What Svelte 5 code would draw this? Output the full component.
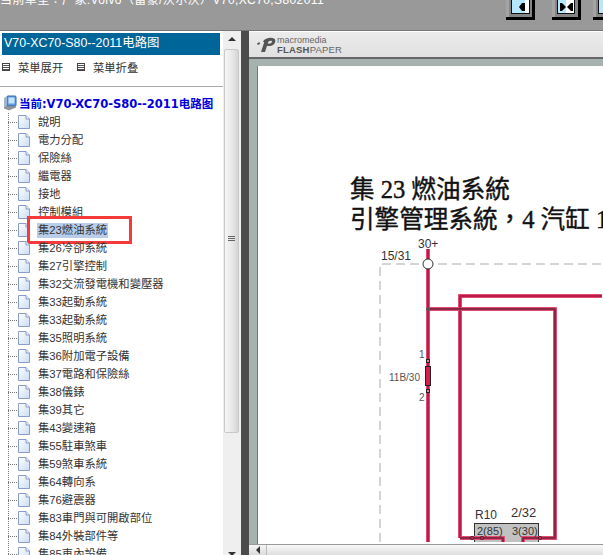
<script>
  const items = ['說明','電力分配','保險絲','繼電器','接地','控制模組','集23燃油系統','集26冷卻系統','集27引擎控制','集32交流發電機和變壓器','集33起動系統','集33起動系統','集35照明系統','集36附加電子設備','集37電路和保險絲','集38儀錶','集39其它','集43變速箱','集55駐車煞車','集59煞車系統','集64轉向系','集76避震器','集83車門與可開啟部位','集84外裝部件等','集85車內設備'];
  const selected = 6;
  const wires = [
    { d: 'M429 250V543', core: '#a01a40' },
    { d: 'M461 539V297H603', core: '#a01a40' },
    { d: 'M429 310H556V539H524V543', core: '#3e343a' },
    { d: 'M461 539H504V543', core: '#3e343a' }
  ];
</script>

<div class="app">
  <header class="top">
    <div class="crumb">当前車型：厂家:Volvo（富豪/沃尔沃）V70,XC70,S802011</div>
    <svg class="btn" width="29" height="20" viewBox="0 0 29 20">
      <rect width="29" height="20" fill="#858585"/><rect width="3" height="20" fill="#a4a4a4"/>
      <path d="M0 20V17H26V0H29V20Z" fill="#000"/>
      <rect x="5.5" y="-1" width="18" height="14.5" fill="#b5e8ff" stroke="#111"/><rect x="19" y="0" width="4" height="13" fill="#fff"/>
      <path d="M13 7 16 3H19V11H16Z" fill="#000"/>
    </svg>
    <svg class="btn second" width="29" height="20" viewBox="0 0 29 20">
      <rect width="29" height="20" fill="#858585"/><rect width="3" height="20" fill="#a4a4a4"/>
      <path d="M0 20V17H26V0H29V20Z" fill="#000"/>
      <rect x="5.5" y="-1" width="17" height="14.5" fill="#b5e8ff" stroke="#111"/><rect x="14" y="0" width="8" height="13" fill="#fff"/>
      <path d="M8 3H10L14 7 10 11H8ZM21 3H19L15 7 19 11H21Z" fill="#000"/>
    </svg>
    <svg class="btn third" width="29" height="20" viewBox="0 0 29 20">
      <rect width="29" height="20" fill="#858585"/><rect width="3" height="20" fill="#a4a4a4"/>
      <path d="M0 20V17H29V20Z" fill="#000"/>
      <rect x="5.5" y="-1" width="17" height="14.5" fill="#b5e8ff" stroke="#111"/>
    </svg>
  </header>

  <div class="main">
    <aside class="left">
      <div class="tree">
        <h1 class="title">V70-XC70-S80--2011电路图</h1>
        <div class="actions">
          <span class="action"><i class="menu-icon"></i>菜単展开</span>
          <span class="action"><i class="menu-icon"></i>菜単折叠</span>
        </div>
        <div class="root">
          <svg width="14" height="16" viewBox="0 0 14 16">
            <rect x="4" y="1" width="9" height="10" rx="1" fill="#5f9be0" stroke="#3568ad"/>
            <rect x="5.5" y="2.5" width="6" height="6" fill="#c8e4fa"/>
            <path d="M1 3 4 1V11L1 13Z" fill="#9fb6d2"/>
            <path d="M1 13 6 15 13 12 8 11 4 11Z" fill="#8c97a8" stroke="#666" stroke-width=".5"/>
          </svg>
          <span>当前:V70-XC70-S80--2011电路图</span>
        </div>
        <ul class="list">
          {#each items as item, i}
            <li class="row">
              <span class="conn"></span>
              <svg class="page-icon" width="12" height="16" viewBox="0 0 12 16">
                <defs><linearGradient id="pg{i}" x1="0" y1="0" x2="1" y2="1"><stop offset="0" stop-color="#fff"/><stop offset="1" stop-color="#c9dcf5"/></linearGradient></defs>
                <path d="M.5 1.5H8L11.5 5V14.5H.5Z" fill="url(#pg{i})" stroke="#8a9cc8"/>
                <path d="M8 1.5V5H11.5" fill="#e8f0fb" stroke="#8a9cc8"/>
              </svg>
              <span class="label" class:selected={i === selected}>{item}</span>
              {#if i === selected}<span class="mark"></span>{/if}
            </li>
          {/each}
        </ul>
      </div>
      <div class="vscroll">
        <span class="arrow up"></span>
        <div class="vthumb"><i></i><i></i><i></i></div>
        <span class="arrow down"></span>
      </div>
    </aside>

    <div class="divider"></div>

    <section class="right">
      <div class="brand">
        <svg width="19" height="16" viewBox="0 0 19 16">
          <path d="M0 6.5 2.5 5 3 7 .8 8ZM6 4.5C8 1 14 0 17 1.5 19.5 3 18.5 7 15 8.5 13 9.2 11.5 9 10 8.8L8 15H4L7.2 5.2C6.8 5 6.4 4.8 6 4.5ZM11.5 4.5 10.8 6.5C13 7 15 6 15 4.5 15 3.5 12.8 3.5 11.5 4.5Z" fill="#555"/>
        </svg>
        <div class="brand-text">
          <span class="mm">macromedia</span>
          <span class="fp"><b>FLASH</b>PAPER</span>
        </div>
      </div>
      <div class="doc">
        <div class="page">
          <h2 class="doc-title">集 23 燃油系統<br />引擎管理系統，4 汽缸 1</h2>
          <svg class="diagram" width="344" height="308" viewBox="259 235 344 308">
            <path d="M381 543V265H603" fill="none" stroke="#aaa" stroke-dasharray="9 5"/>
            <rect x="475.5" y="524.5" width="64" height="20" fill="#c2c2c2" stroke="#333"/>
            {#each wires as w}
              <path d={w.d} fill="none" stroke="#f0789a" stroke-width="4"/>
              <path d={w.d} fill="none" stroke="#d61f4e" stroke-width="3"/>
            {/each}
            {#each wires as w}
              <path d={w.d} fill="none" stroke={w.core} stroke-width="1"/>
            {/each}
            <circle cx="429" cy="265" r="5" fill="#fff" stroke="#333"/>
            <circle cx="429" cy="310" r="2" fill="#555"/>
            <rect x="426.5" y="367.5" width="5" height="19" fill="#d61f4e" stroke="#222"/>
            <rect x="427.5" y="360.5" width="3" height="3" fill="#e88" stroke="#222"/>
            <rect x="427.5" y="390.5" width="3" height="3" fill="#e88" stroke="#222"/>
            <circle cx="473" cy="539" r="1.7" fill="#d61f4e" stroke="#222" stroke-width=".7"/>
            <circle cx="483" cy="539" r="1.7" fill="#d61f4e" stroke="#222" stroke-width=".7"/>
            <circle cx="541" cy="539" r="1.7" fill="#d61f4e" stroke="#222" stroke-width=".7"/>
            <text x="419" y="249" class="t big">30+</text>
            <text x="382" y="261" class="t big">15/31</text>
            <text x="420" y="359" class="t sm">1</text>
            <text x="390" y="382" class="t sm">11B/30</text>
            <text x="420" y="402" class="t sm">2</text>
            <text x="476" y="520" class="t big">R10</text>
            <text x="512" y="518" class="t lg">2/32</text>
            <text x="478" y="536" class="t mid">2(85)</text>
            <text x="513" y="536" class="t mid">3(30)</text>
          </svg>
        </div>
      </div>
      <div class="hscroll">
        <span class="harrow"></span>
        <div class="hthumb"></div>
      </div>
    </section>
  </div>
</div>

<style>
  :global(body) { margin: 0; }
  .app { width: 603px; height: 555px; overflow: hidden; display: flex; flex-direction: column; background: #999; font-family: "Liberation Sans", "Noto Sans CJK TC", sans-serif; }
  .top { height: 30px; flex: none; display: flex; align-items: flex-start; background: #999; overflow: hidden; position: relative; }
  .crumb { width: 506px; flex: none; margin-top: -9px; color: #fff; font-size: 12px; line-height: 18px; letter-spacing: .4px; white-space: nowrap; overflow: hidden; }
  .btn { flex: none; display: block; }
  .second { margin-left: 17px; }
  .third { margin-left: 12px; }
  .main { height: 525px; flex: none; display: flex; border-top: 1px solid #777; box-sizing: content-box; }
  .left { width: 241px; flex: none; display: flex; background: #fff; }
  .tree { width: 223px; flex: none; overflow: hidden; }
  .title { margin: 2px 3px 0 2px; height: 22px; padding-left: 2px; background: #006699; color: #fff; font-weight: 400; font-size: 12.4px; line-height: 21px; white-space: nowrap; }
  .actions { display: flex; align-items: center; border-bottom: 1px solid #aaa; font-size: 11.3px; color: #333; box-sizing: border-box; padding-bottom: 8px; height: 32px; }
  .action { display: flex; align-items: center; width: 73px; margin-left: 2px; }
  .menu-icon { width: 6px; height: 6px; flex: none; border: 1px solid #444; margin-right: 8px; background: repeating-linear-gradient(#fff 0 1px, #555 1px 2px); }
  .root { height: 17px; display: flex; align-items: center; gap: 2px; padding-left: 3px; color: #00d; font: 700 11.5px "DejaVu Sans", "Noto Sans CJK SC", sans-serif; white-space: nowrap; margin-top: 7px; margin-bottom: 2px; }
  .list { list-style: none; margin: 0; padding: 0; }
  .row { height: 18px; display: flex; align-items: center; position: relative; color: #333; font-size: 11.3px; }
  .conn { width: 9px; height: 18px; margin-left: 8px; flex: none;
    background:
      repeating-linear-gradient(to bottom, #777 0 1px, transparent 1px 2px) left top / 1px 100% no-repeat,
      repeating-linear-gradient(to right, #777 0 1px, transparent 1px 2px) left 9px / 100% 1px no-repeat; }
  .page-icon { flex: none; margin-left: 1px; }
  .label { margin-left: 7px; padding: 0 1px; white-space: nowrap; line-height: 15px; }
  .label.selected { background: #b9cde9; }
  .mark { position: absolute; left: 27px; top: -5px; width: 105px; height: 28px; box-sizing: border-box; border: 3px solid #f53a3a; }
  .vscroll { width: 18px; flex: none; background: #efefef; position: relative; display: flex; flex-direction: column; align-items: center; }
  .arrow { width: 0; height: 0; border: 4px solid transparent; position: absolute; left: 5px; }
  .arrow.up { top: 6px; border-top: 0; border-bottom: 4px solid #333; }
  .arrow.down { bottom: 0; border-bottom: 0; border-top: 4px solid #333; }
  .vthumb { position: absolute; top: 18px; left: 1px; width: 15px; height: 384px; box-sizing: border-box; border: 1px solid #c8c8c8; border-radius: 2px; padding-bottom: 6px; background: linear-gradient(to right, #f6f6f6, #e6e6e6 60%, #d4d4d4); display: flex; flex-direction: column; justify-content: center; align-items: center; gap: 1px; }
  .vthumb i { width: 7px; height: 1px; background: #666; }
  .divider { width: 8px; flex: none; background: #4b4b4b; }
  .right { flex: 1; min-width: 0; display: flex; flex-direction: column; background: #e4e4e4; }
  .brand { height: 28px; flex: none; display: flex; align-items: center; gap: 1px; padding-left: 8px; box-sizing: border-box; background: linear-gradient(#ececec, #e0e0e0); border-bottom: 2px solid #666; border-top: 1px solid #fff; }
  .brand-text { display: flex; flex-direction: column; color: #666; margin-top: 1px; }
  .mm { font-size: 9px; line-height: 9px; font-family: "Liberation Sans", sans-serif; }
  .fp { font-size: 9.5px; line-height: 9px; font-family: "Liberation Sans", sans-serif; letter-spacing: .2px; }
  .fp b { color: #555; }
  .doc { flex: 1; min-height: 0; background: #a5b2b0; padding: 7px 0 0 9px; display: flex; overflow: hidden; }
  .page { flex: 1; min-width: 0; background: #fff; border-left: 1px solid #777; margin-left: -1px; overflow: hidden; padding-top: 109px; }
  .doc-title { margin: 0 0 0 92px; white-space: nowrap; font: 400 24.6px/30px "Liberation Serif", "Noto Sans CJK TC", serif; -webkit-text-stroke: .4px #111; color: #111; height: 59px; }
  .diagram { display: block; }
  .t { font: 10px "Liberation Sans", sans-serif; fill: #444; }
  .t.big { font-size: 12px; fill: #333; }
  .t.lg { font-size: 13px; fill: #333; }
  .t.mid { font-size: 11px; fill: #333; }
  .t.sm { font-size: 10px; fill: #555; }
  .hscroll { height: 12px; flex: none; display: flex; background: linear-gradient(#f6f6f6, #d8d8d8); border-top: 1px solid #999; box-sizing: border-box; }
  .harrow { width: 18px; position: relative; border-right: 1px solid #bbb; box-sizing: border-box; }
  .harrow::after { content: ""; position: absolute; left: 7px; top: 1px; border: 4px solid transparent; border-left: 0; border-right: 4px solid #333; }
  .hthumb { flex: 1; background: linear-gradient(#f8f8f8, #dcdcdc); }
</style>
